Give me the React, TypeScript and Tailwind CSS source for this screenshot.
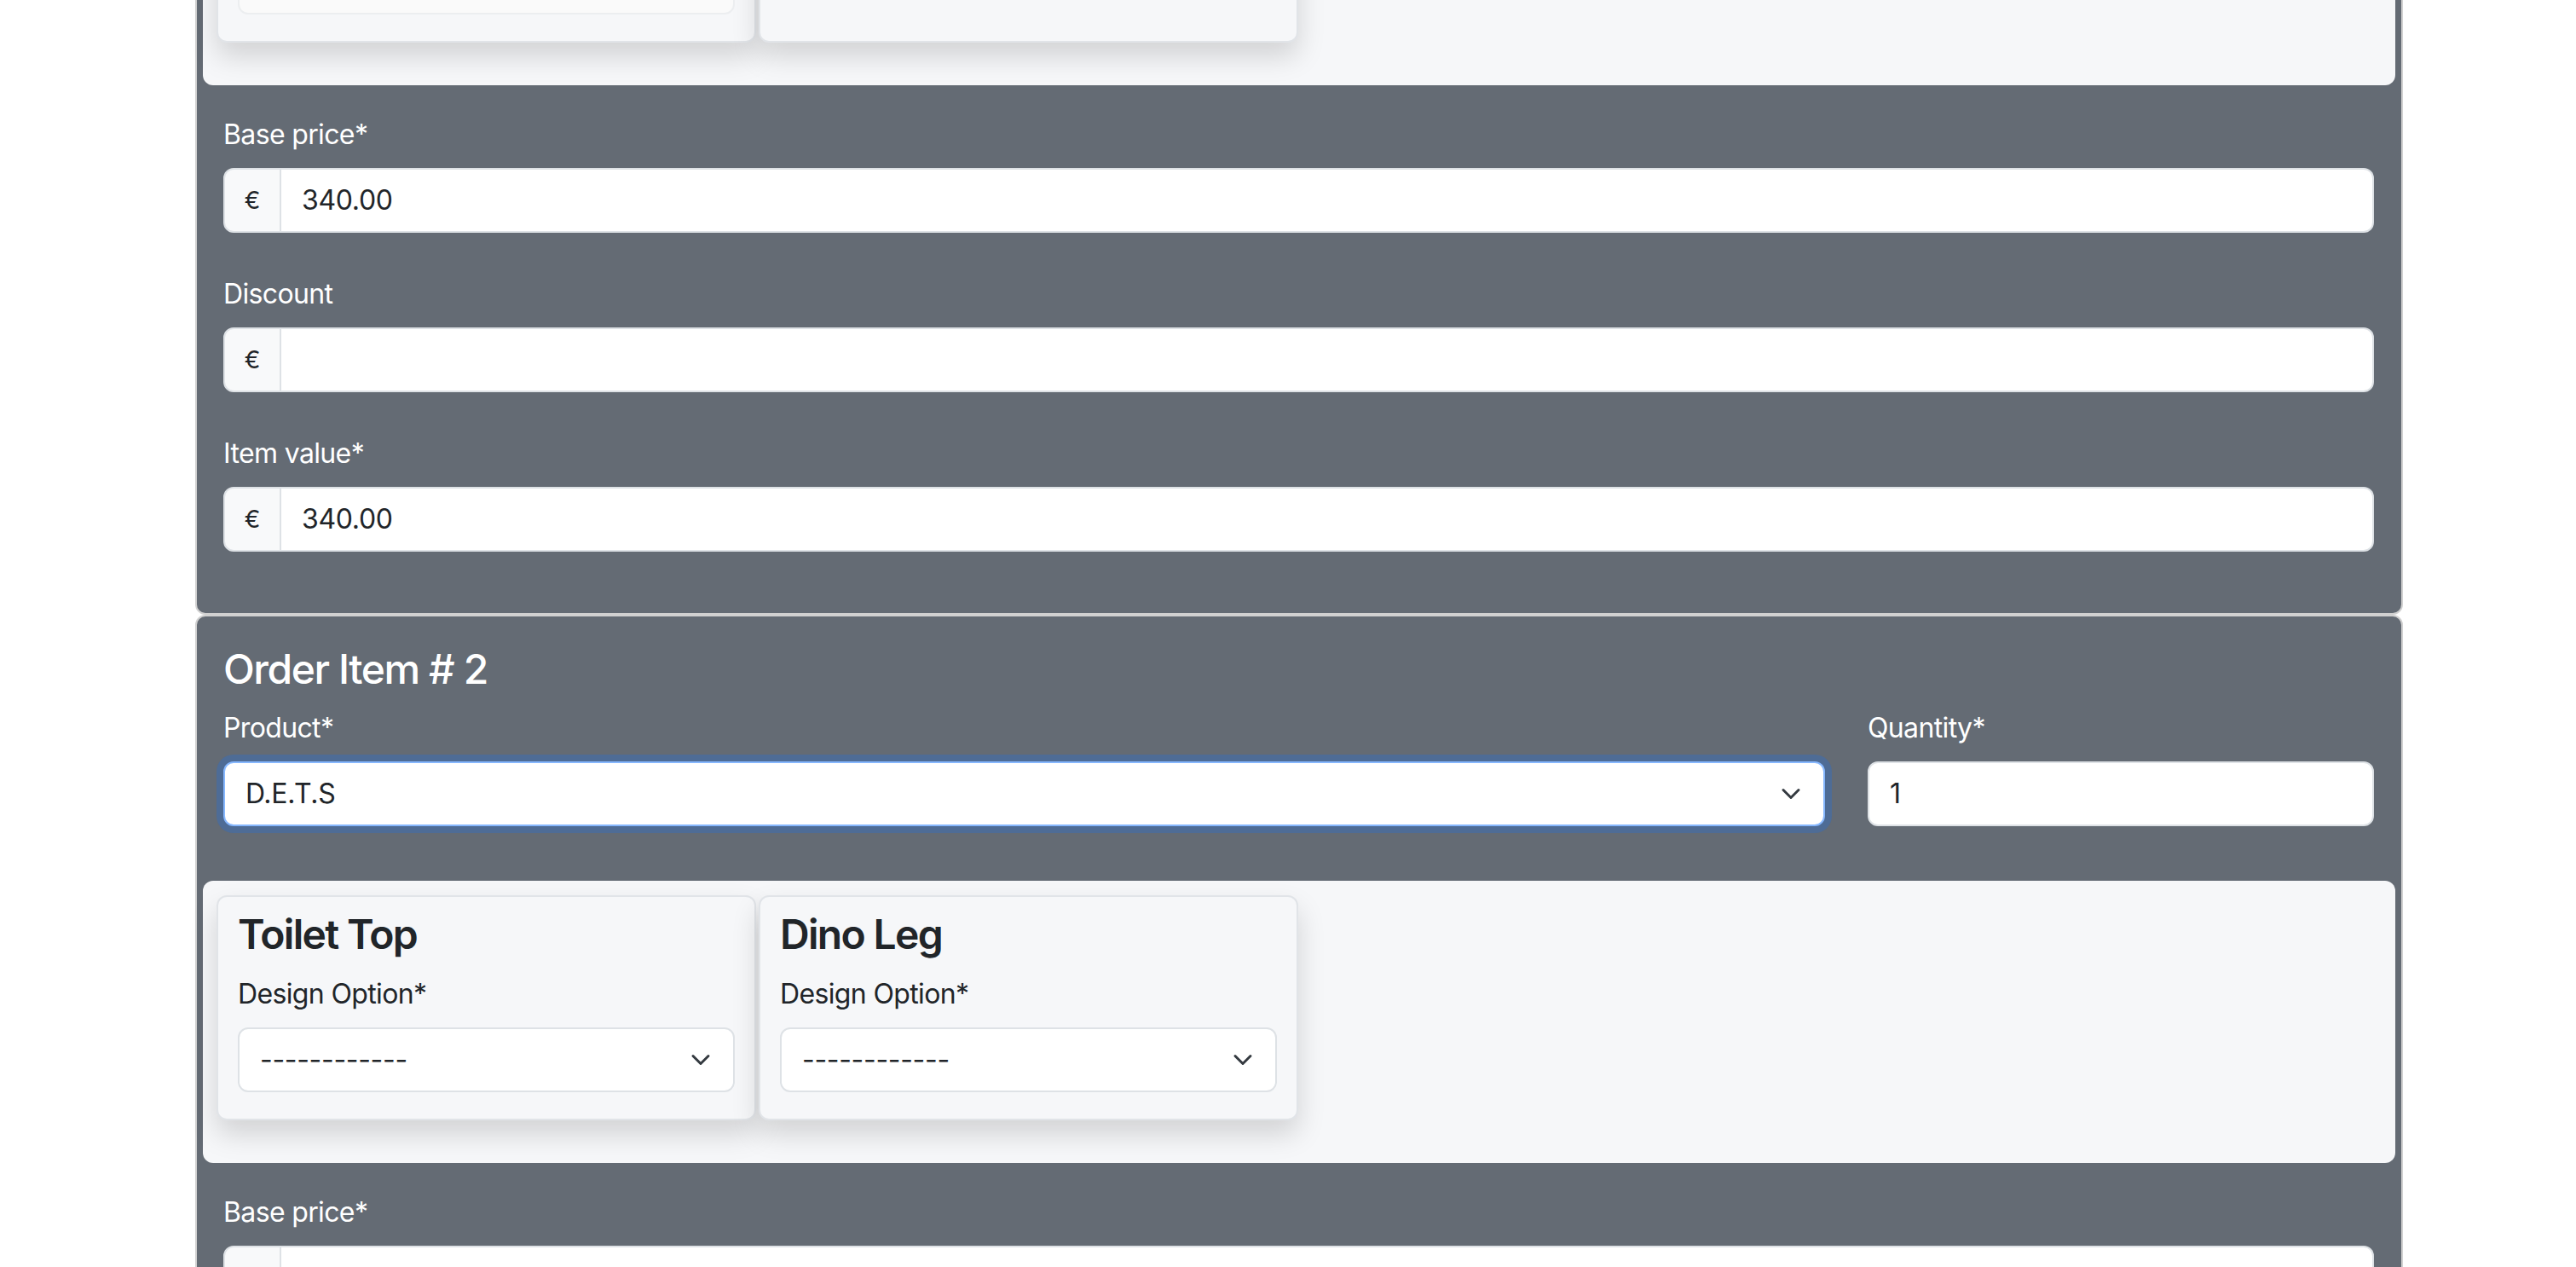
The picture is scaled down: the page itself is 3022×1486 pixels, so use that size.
import React from "react";

const labelCls = "block text-[32px] leading-[48px] tracking-[-0.02em] mb-[15px]";

function Chevron() {
  return (
    <svg
      viewBox="0 0 16 16"
      className="pointer-events-none absolute right-[28px] top-1/2 -translate-y-1/2 w-[24px] h-[24px]"
      fill="none"
      stroke="#343a40"
      strokeWidth="2"
      strokeLinecap="round"
      strokeLinejoin="round"
    >
      <path d="M2 5l6 6 6-6" />
    </svg>
  );
}

function Select({ value, focused, muted }: { value: string; focused?: boolean; muted?: boolean }) {
  const tone = focused
    ? "border-[#86b7fe] bg-white shadow-[0_0_0_8px_rgba(13,110,253,0.25)]"
    : muted
    ? "border-[#eceef0] bg-[#fafafa]"
    : "border-[#dee2e6] bg-white";
  return (
    <div className="relative">
      <div className={`h-[76px] rounded-[12px] border-2 pl-[24px] pr-[80px] flex items-center text-[32px] tracking-[-0.01em] text-[#212529] ${tone}`}>
        {value}
      </div>
      {!muted && <Chevron />}
    </div>
  );
}

function MoneyField({ label, value }: { label: string; value: string }) {
  return (
    <div className="mb-[48px]">
      <label className={`${labelCls} text-white`}>{label}</label>
      <div className="flex h-[76px]">
        <span className="w-[68px] shrink-0 flex items-center justify-center rounded-l-[12px] border-2 border-[#dee2e6] bg-[#f8f9fa] text-[28px] text-[#212529]">
          €
        </span>
        <div className="flex-1 flex items-center rounded-r-[12px] border-2 border-l-0 border-[#dee2e6] bg-white px-[24px] text-[32px] tracking-[-0.01em] text-[#212529]">
          {value}
        </div>
      </div>
    </div>
  );
}

function PartCard({ title, extra }: { title: string; extra?: boolean }) {
  return (
    <div className="w-[633px] rounded-[12px] border-2 border-[#e1e4e8] bg-[#f6f7f9] px-[23px] pt-[15px] pb-[31px] shadow-[0_16px_32px_rgba(0,0,0,0.15)]">
      <h5 className="text-[48px] leading-[1.2] font-semibold text-[#212529] tracking-[-0.035em] mb-[18px]">{title}</h5>
      <label className={`${labelCls} text-[#212529]`}>Design Option*</label>
      <Select value="------------" />
      {extra && (
        <div className="mt-[16px]">
          <label className={`${labelCls} text-[#212529]`}>Notes</label>
          <Select value="" muted />
        </div>
      )}
    </div>
  );
}

function OrderItem({ n, product, focused, extra }: { n: number; product: string; focused?: boolean; extra?: boolean }) {
  return (
    <div className="rounded-[12px] border-2 border-[#d1d1d1] bg-[#646b74] pl-[31px] pr-[32px] pt-[33px] pb-[24px]">
      <h4 className="text-[48px] leading-[1.2] font-medium text-white tracking-[-0.03em] mb-[16px]">Order Item # {n}</h4>
      <div className="flex gap-[50px]">
        <div className="flex-1">
          <label className={`${labelCls} text-white`}>Product*</label>
          <Select value={product} focused={focused} />
        </div>
        <div className="w-[594px]">
          <label className={`${labelCls} text-white`}>Quantity*</label>
          <div className="h-[76px] rounded-[12px] border-2 border-[#dee2e6] bg-white px-[24px] flex items-center text-[32px] text-[#212529]">
            1
          </div>
        </div>
      </div>

      {/* product parts */}
      <div className="-ml-[24px] -mr-[25px] mt-[64px] rounded-[12px] bg-[#f6f7f9] pt-[17px] pl-[16px] pr-[16px] pb-[50px]">
        <div className="flex gap-[3px]">
          <PartCard title="Toilet Top" extra={extra} />
          <PartCard title="Dino Leg" />
        </div>
      </div>

      <div className="mt-[34px]">
        <MoneyField label="Base price*" value="340.00" />
        <MoneyField label="Discount" value="" />
        <MoneyField label="Item value*" value="340.00" />
      </div>
    </div>
  );
}

export default function App() {
  return (
    <div className="h-[1486px] overflow-hidden bg-white font-['Inter',sans-serif]">
      <div className="ml-[229px] w-[2590px] -mt-[698px]">
        <OrderItem n={1} product="D.E.T.S" extra />
        <OrderItem n={2} product="D.E.T.S" focused />
      </div>
    </div>
  );
}
